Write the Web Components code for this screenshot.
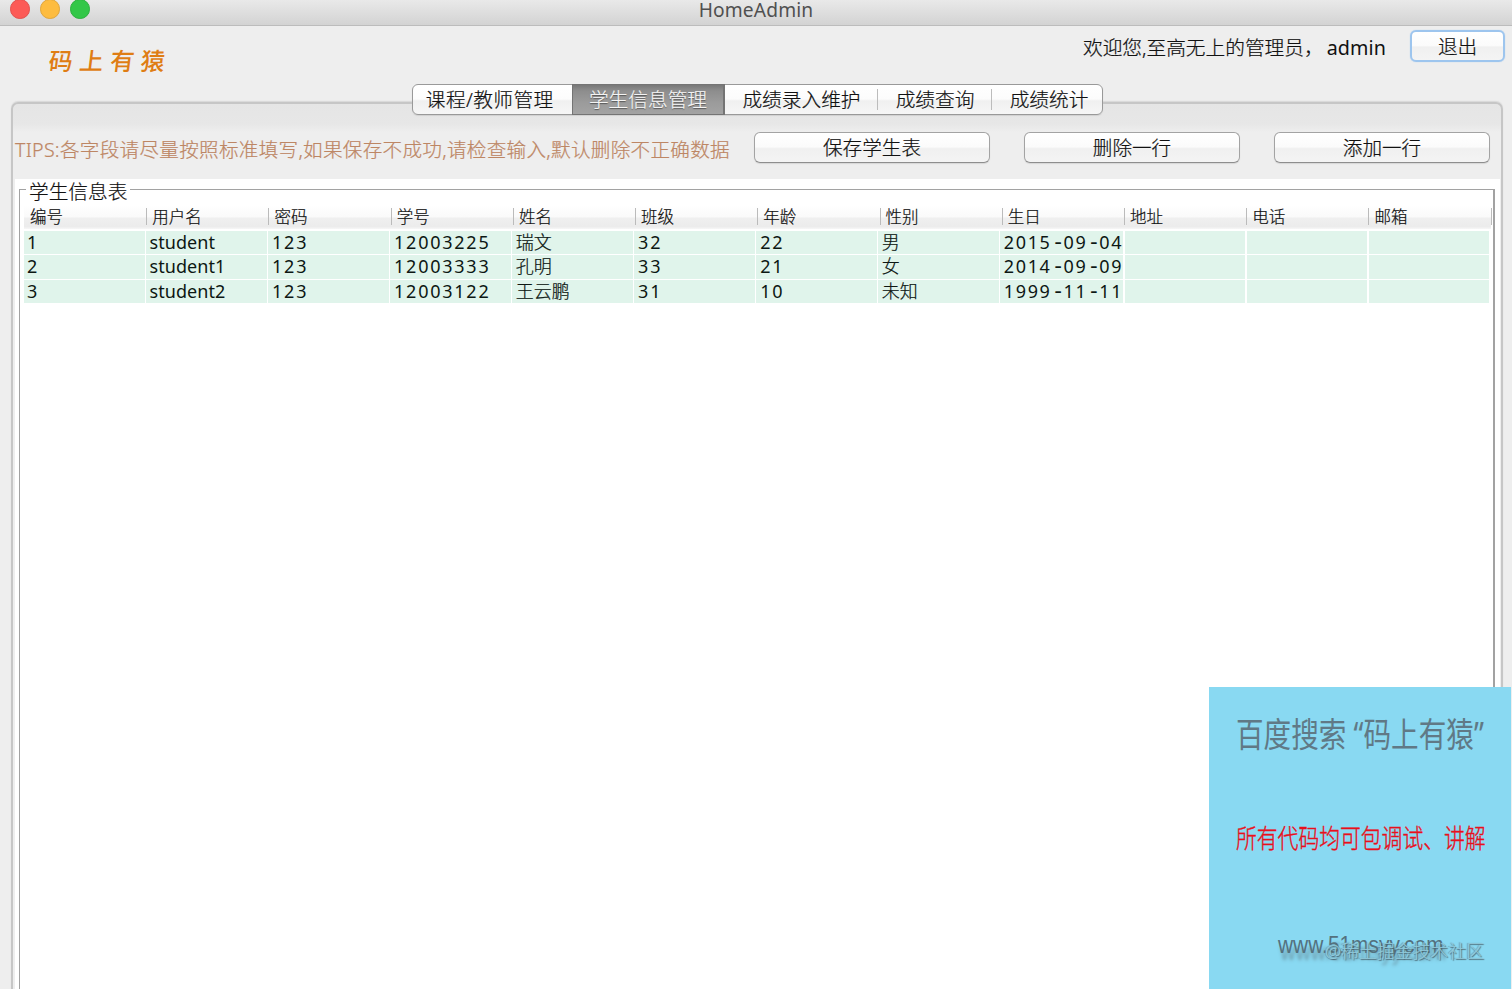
<!DOCTYPE html>
<html lang="zh-CN">
<head>
<meta charset="utf-8">
<title>HomeAdmin</title>
<style>
html,body{margin:0;height:100%;overflow:hidden;background:#eee}
body{font-family:"Noto Sans","Noto Sans CJK SC",sans-serif;font-weight:300;color:#111;-webkit-text-stroke:.22px}
</style>
</head>
<body>
<home-window></home-window>
<script>
function define(name, html, setup){
  const t=document.createElement('template'); t.innerHTML=html;
  customElements.define(name, class extends HTMLElement{
    constructor(){super();this.attachShadow({mode:'open'}).append(t.content.cloneNode(true));}
    connectedCallback(){ if(setup) setup(this,this.shadowRoot); }
  });
}

define('title-bar', `<style>
:host{display:grid;grid-template-columns:1fr auto 1fr;flex:none;height:26px;box-sizing:border-box;border-bottom:1px solid #bcbcbc;background:linear-gradient(#e9e9e9,#d3d3d3)}
.lights{display:flex;gap:10.5px;padding-left:10px;margin-top:-1px}
i{border-radius:50%;box-sizing:border-box;width:19.5px;height:19.5px;border:1px solid;flex:none}
.r{background:#fc5b57;border-color:#e2504c}.y{background:#fdbc40;border-color:#e0a53a}.g{background:#33c748;border-color:#2bb03c}
span{font-size:19.2px;line-height:20px;height:24px;font-weight:400;-webkit-text-stroke:0;color:#505050;letter-spacing:.15px}
</style><div class="lights"><i class="r"></i><i class="y"></i><i class="g"></i></div><span><slot></slot></span>`);

define('brand-mark', `<style>
:host{display:block;color:#df7d14;font:500 24px/30px "Noto Sans CJK SC",sans-serif;-webkit-text-stroke:0;letter-spacing:6.7px;transform:skewX(-7deg)}
</style><slot></slot>`);

define('aqua-button', `<style>
:host{display:block;box-sizing:border-box;height:31px;border:1px solid #a3a3a3;border-bottom-color:#8e8e8e;border-radius:6px;background:linear-gradient(#fff,#fbfbfb 48%,#f0f0f0 54%,#f4f4f4);box-shadow:0 1px 1px #d6d6d6;text-align:center;font-size:19.6px;line-height:29px;color:#111}
:host([focused]){border:2px solid #9dc5ee;line-height:29px;height:32px;box-shadow:0 0 1px #9dc5ee}
</style><slot></slot>`);

define('aqua-tabs', `<style>
:host{display:flex;box-sizing:border-box;width:691px;height:31px;border:1px solid #999;border-radius:6px;background:linear-gradient(#fff,#fcfcfc 48%,#f0f0f0 55%,#f6f6f6);box-shadow:0 1px 1px #d0d0d0}
</style><slot></slot>`);

define('aqua-tab', `<style>
:host{display:block;position:relative;width:var(--w);flex:none;box-sizing:border-box;text-align:center;font-size:19.7px;line-height:29px;height:29px;white-space:nowrap}
:host([split])::after{content:"";position:absolute;right:0;top:4px;height:21px;width:1px;background:#bcbcbc}
:host([active]){height:31px;margin-top:-1px;color:#f4f4f4;text-shadow:0 1px 1px #555;background:linear-gradient(#777,#8d8d8d 20%,#9b9b9b 60%,#a3a3a3);border:solid #747474;border-width:1px 2px 1px 1px}
</style><slot></slot>`);

define('student-table', `<style>
:host{display:block;width:1466.7px}
.row{display:grid;grid-template-columns:repeat(12,1fr);height:23.3px;margin-bottom:1px}
.row span{background:#e0f4eb;margin-right:1.5px;padding-left:3.6px;font-size:18px;line-height:23px;white-space:nowrap;color:#0d1713}
.row .num,.row .date,.row .one,.row .stu{font-weight:400;-webkit-text-stroke:0}
.row .one{padding-left:3px}
.row .num{letter-spacing:1.75px;padding-left:4px}
.row .date{letter-spacing:1.65px}
.row .date b{font:400 22px/18px "DejaVu Sans Mono",monospace;letter-spacing:-1.4px}
.row .stu{letter-spacing:.05px}
.head{display:grid;grid-template-columns:repeat(12,1fr);height:24px;margin-bottom:2px;background:linear-gradient(#fff,#fafafa 48%,#efefef 56%,#ececec 90%,#f7f7f7)}
.head span{font-size:16.5px;line-height:24px;padding-left:6px;position:relative}
.head span::after{content:"";position:absolute;right:-1px;top:3px;height:17px;width:1px;background:#bbb}
</style><div class="head"></div><div class="body"></div>`, (el,root)=>{
  const head=['编号','用户名','密码','学号','姓名','班级','年龄','性别','生日','地址','电话','邮箱'];
  const rows=[
    ['1','student','123','12003225','瑞文','32','22','男','2015-09-04','','',''],
    ['2','student1','123','12003333','孔明','33','21','女','2014-09-09','','',''],
    ['3','student2','123','12003122','王云鹏','31','10','未知','1999-11-11','','','']];
  const cls=['one','stu','num','num','','num','num','','date','','',''];
  const cell=(txt,c)=>{
    const s=document.createElement('span');
    if(c) s.className=c;
    if(c==='date') s.innerHTML=txt.replace(/-/g,'<b>-</b>'); else s.textContent=txt;
    return s;
  };
  root.querySelector('.head').replaceChildren(...head.map(h=>cell(h)));
  root.querySelector('.body').replaceChildren(...rows.map(r=>{
    const d=document.createElement('div');d.className='row';d.append(...r.map((v,i)=>cell(v,cls[i])));return d;}));
});

define('titled-box', `<style>
:host{display:block;background:#fff;margin-right:1px;padding:10px 5px 0 4px;height:900px;box-sizing:border-box}
.frame{border:1px solid #a2a2a2;height:100%;padding:0 0 0 4px;box-sizing:border-box;border-right-width:2px}
.legend{display:block;width:max-content;background:#fff;font-size:19.7px;line-height:25px;height:24px;margin:-11px 0 2px 2px;padding:0 3px}
</style><div class="frame"><span class="legend">学生信息表</span><slot></slot></div>`);

define('promo-panel', `<style>
:host{display:flex;flex-direction:column;width:302px;height:302px;background:#89d9f2;box-sizing:border-box;padding:23px 0 0 27px;white-space:nowrap}
div{transform-origin:0 0}
.a{font-size:34.5px;line-height:48px;color:#607986;transform:scaleX(.8);font-weight:400;-webkit-text-stroke:0}
.b{font-size:26px;line-height:36px;color:#e8101c;margin-top:62px;transform:scaleX(.8);-webkit-text-stroke:.4px}
.c{margin:73px 0 0 42px;font:24px/32px "Liberation Sans",sans-serif;-webkit-text-stroke:0;color:#54717e;text-shadow:3px 7px 4px #6b98a8;transform:scaleX(.87)}
.d{position:absolute;left:116px;top:252px;font-size:17.9px;line-height:24px;color:#8fcadc;text-shadow:1px 1px 1px #47626d,-1px 0 1px #6994a3}
</style><div class="a">百度搜索 “码上有猿”</div><div class="b">所有代码均可包调试、讲解</div><div class="c">www.51msyy.com</div><div class="d">@稀土掘金技术社区</div>`);

define('home-window', `<style>
:host{display:flex;flex-direction:column;height:989px;position:relative;overflow:hidden;background:#eee}
header{display:flex;height:58px;flex:none;align-items:flex-start}
brand-mark{margin:19px auto 0 49px}
.hi{font-size:19.7px;line-height:28px;margin:8px 24px 0 0;white-space:pre;color:#111}
.hi b{font-weight:400;-webkit-text-stroke:0;margin-left:3px;letter-spacing:.1px}
header aqua-button{width:95px;margin:4px 7px 0 0}
.tabs{display:flex;justify-content:center;padding-left:2px;height:31px;z-index:1;flex:none}
.panel{margin:-13px 9px 0 11px;height:1000px;flex:none;box-sizing:border-box;border:2px solid #c6c6c6;border-radius:7px 7px 0 0;background:linear-gradient(#e5e5e5,#e7e7e7 20px,#eee 28px);box-shadow:0 -1px 1px #d8d8d8;padding:0 0 0 2px}
.tools{display:flex;height:75px;align-items:flex-start}
.tip{width:739px;font-size:19.6px;line-height:28px;margin-top:32px;color:#bd8664;white-space:nowrap;letter-spacing:.28px}
.tools aqua-button{margin-top:28px}
promo-panel{position:absolute;left:1209px;top:687px}
</style>
<title-bar>HomeAdmin</title-bar>
<header><brand-mark>码上有猿</brand-mark><div class="hi">欢迎您,至高无上的管理员，<b>admin</b></div><aqua-button focused>退出</aqua-button></header>
<div class="tabs"><aqua-tabs>
<aqua-tab style="--w:159.5px;letter-spacing:.4px;padding-right:5px">课程/教师管理</aqua-tab><aqua-tab active style="--w:153px">学生信息管理</aqua-tab><aqua-tab split style="--w:153px">成绩录入维护</aqua-tab><aqua-tab split style="--w:114px">成绩查询</aqua-tab><aqua-tab style="--w:109px;padding-left:5px">成绩统计</aqua-tab>
</aqua-tabs></div>
<div class="panel">
<div class="tools"><div class="tip">TIPS:各字段请尽量按照标准填写,如果保存不成功,请检查输入,默认删除不正确数据</div>
<aqua-button style="width:236px">保存学生表</aqua-button><aqua-button style="width:216px;margin-left:34px">删除一行</aqua-button><aqua-button style="width:216px;margin-left:34px">添加一行</aqua-button></div>
<titled-box><student-table></student-table></titled-box>
</div>
<promo-panel></promo-panel>`);
</script>
</body>
</html>
